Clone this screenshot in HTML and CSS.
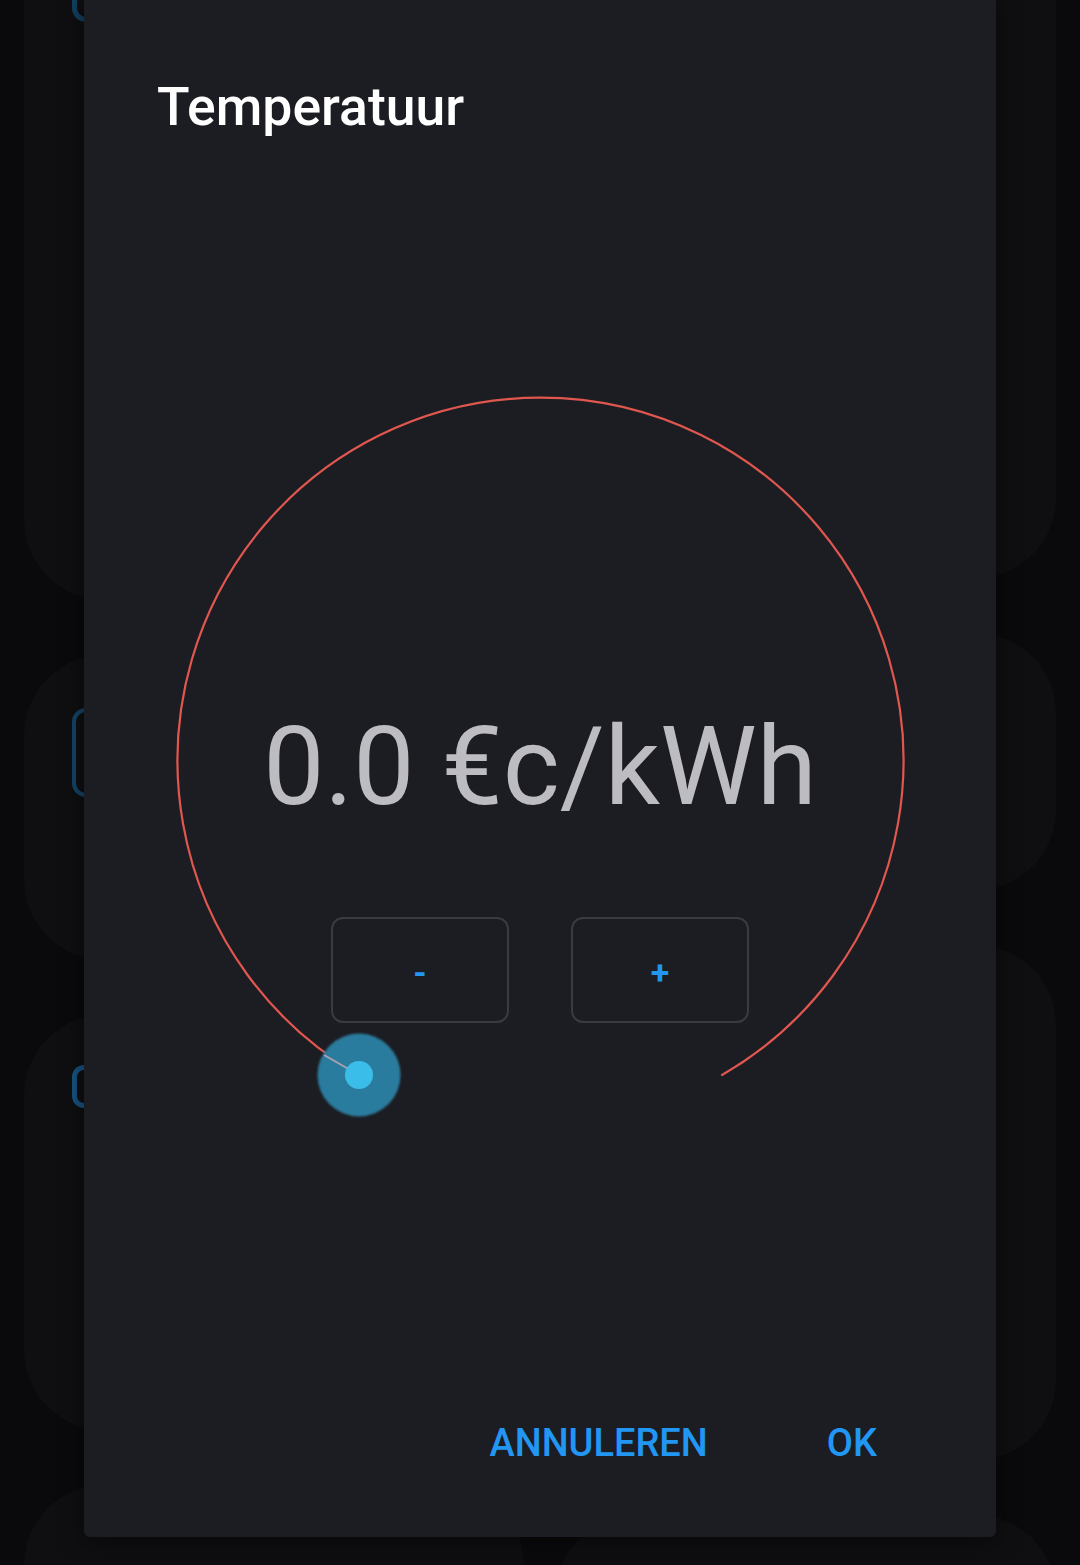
FILE: index.html
```html
<!DOCTYPE html>
<html>
<head>
<meta charset="utf-8">
<link rel="stylesheet" href="styles.css">
</head>
<body>
<div class="screen">
  <div class="bg">
    <div class="col">
      <div class="tile t-l1"><span class="ico ico-l1"></span></div>
      <div class="tile t-l2"><span class="ico ico-l2"></span></div>
      <div class="tile t-l3"><span class="ico ico-l3"></span></div>
      <div class="tile t-l4"></div>
    </div>
    <div class="col">
      <div class="tile t-r1"></div>
      <div class="tile t-r2"></div>
      <div class="tile t-r3"></div>
      <div class="tile t-r4"></div>
    </div>
  </div>

  <div class="dialog">
    <h1 class="title">Temperatuur</h1>
    <div class="dial">
      <svg class="dial-svg" width="728" height="728" viewBox="0 0 728 728">
        <defs>
          <filter id="soft" x="-20%" y="-20%" width="140%" height="140%">
            <feGaussianBlur stdDeviation="1.2"/>
          </filter>
        </defs>
        <path d="M 183 679 A 363 363 0 1 1 546 679" fill="none" stroke="#e0574f" stroke-width="2.2" stroke-linecap="round"/>
        <circle cx="183" cy="679" r="41.5" fill="#2b7b9e" filter="url(#soft)"/>
        <line x1="148" y1="659" x2="183" y2="679" stroke="#aaa2b3" stroke-width="2"/>
        <circle cx="183" cy="679" r="14" fill="#3bbde9"/>
      </svg>
      <div class="value">0.0 €c/kWh</div>
      <div class="steps">
        <button class="step">-</button>
        <button class="step">+</button>
      </div>
    </div>
    <div class="actions">
      <button class="action">ANNULEREN</button>
      <button class="action">OK</button>
    </div>
  </div>
</div>
</body>
</html>
```

FILE: styles.css
```css
* { box-sizing: border-box; }

html, body {
  margin: 0;
  padding: 0;
  background: #0a0a0c;
}

.screen {
  position: relative;
  width: 1080px;
  height: 1565px;
  overflow: hidden;
  background: #0a0a0c;
  font-family: Roboto, "Noto Sans", sans-serif;
}

/* dimmed dashboard behind the dialog */
.bg {
  display: flex;
  gap: 32px;
  padding: 0 24px;
}

.col {
  width: 500px;
  margin-top: -100px;
  display: flex;
  flex-direction: column;
  gap: 55px;
}

.tile {
  background: #0f0f11;
  border-radius: 80px;
  padding-left: 48px;
}

.t-l1 { height: 700px; padding-top: 78px; }
.t-l2 { height: 305px; padding-top: 53px; }
.t-l3 { height: 415px; padding-top: 50px; }
.t-l4 { height: 300px; }
.t-r1 { height: 678px; }
.t-r2 { height: 257px; }
.t-r3 { height: 515px; }
.t-r4 { height: 300px; }

.ico {
  display: block;
  border-style: solid;
  border-color: #134468;
}

.ico-l1 { width: 44px; height: 44px; border-width: 5px; border-radius: 14px; border-color: #133f60; }
.ico-l2 { width: 44px; height: 89px; border-width: 4px; border-radius: 14px; }
.ico-l3 { width: 44px; height: 43px; border-width: 5px; border-radius: 12px; border-color: #175381; }

/* dialog overlay */
.dialog {
  position: absolute;
  left: 84px;
  top: 0;
  width: 912px;
  height: 1537px;
  background: #1c1d22;
  border-radius: 0 0 6px 6px;
  box-shadow: 0 4px 24px rgba(0, 0, 0, 0.5);
  display: flex;
  flex-direction: column;
}

.title {
  margin: 0;
  padding: 80px 0 0 73px;
  font-family: Roboto, sans-serif;
  font-weight: 500;
  font-size: 53.5px;
  line-height: 1;
  color: #ffffff;
}

.dial {
  position: relative;
  width: 728px;
  height: 728px;
  margin: 262.5px 0 0 92px;
  padding-top: 317px;
  display: flex;
  flex-direction: column;
  align-items: center;
}

.dial-svg {
  position: absolute;
  left: 0;
  top: 0;
  overflow: visible;
}

.value {
  position: relative;
  font-family: Roboto, sans-serif;
  font-weight: 400;
  font-size: 109px;
  line-height: 1;
  color: #bdbdc1;
  white-space: nowrap;
}

.steps {
  position: relative;
  display: flex;
  gap: 62px;
  margin-top: 95px;
}

.step {
  width: 178px;
  height: 106px;
  border: 2px solid #3a3b40;
  border-radius: 12px;
  background: transparent;
  color: #2196f3;
  font-family: Roboto, sans-serif;
  font-weight: 700;
  font-size: 34px;
  line-height: 1;
  padding: 4px 0 0;
}

.actions {
  margin-top: 300px;
  display: flex;
  justify-content: flex-end;
  gap: 119px;
  padding-right: 119px;
}

.action {
  background: none;
  border: 0;
  padding: 0;
  font-family: Roboto, sans-serif;
  font-weight: 500;
  font-size: 38px;
  line-height: 1;
  color: #2196f3;
}
```
